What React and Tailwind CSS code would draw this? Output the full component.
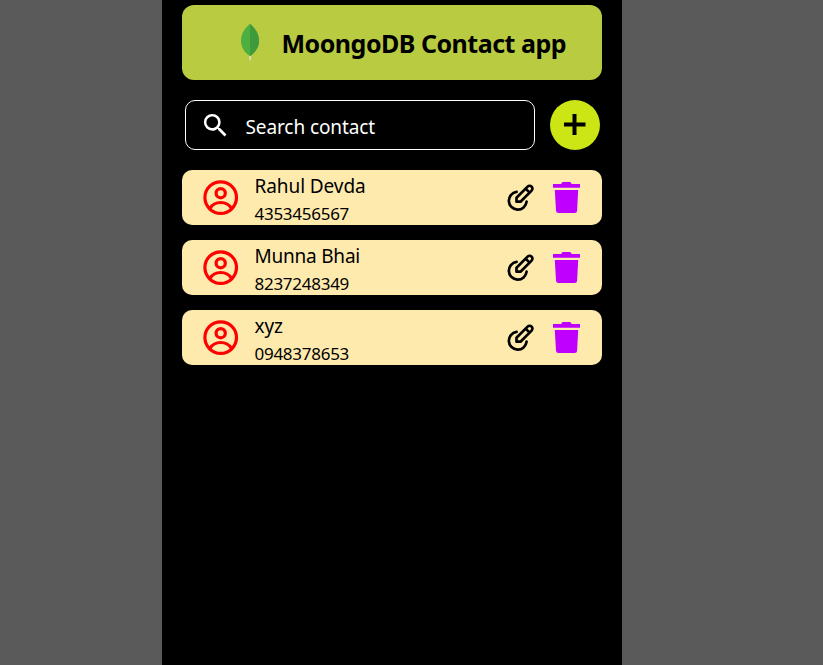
import React from "react";

const contacts = [
  { name: "Rahul Devda", phone: "4353456567", tracking: "tracking-[-0.08px]" },
  { name: "Munna Bhai", phone: "8237248349", tracking: "tracking-[-0.22px]" },
  { name: "xyz", phone: "0948378653", tracking: "tracking-[-0.1px]" },
];

function Leaf() {
  return (
    <svg className="mb-[2px] h-[38px] w-5 shrink-0" viewBox="0 0 20 38">
      <path d="M9.300 31h1.700v6.300H9.500z" fill="#e3dccb" />
      <path d="M10 .8C4.500 6 1 10.500 1 18c0 6 3.200 11 9 15.200C15.800 29 19 24 19 18 19 10.500 15.500 6 10 .8z" fill="#4caf3f" />
      <path d="M10 .8V33.200C15.800 29 19 24 19 18 19 10.500 15.500 6 10 .8z" fill="#3f9a3c" />
    </svg>
  );
}

function SearchIcon() {
  return (
    <svg className="size-[31px] shrink-0" viewBox="0 0 24 24" fill="#fff">
      <path d="M15.500 14h-.79l-.28-.27A6.471 6.471 0 0 0 16 9.500 6.500 6.500 0 1 0 9.500 16c1.610 0 3.090-.59 4.230-1.570l.27.28v.79l5 4.990L20.490 19l-4.990-5zm-6 0C7.010 14 5 11.990 5 9.500S7.010 5 9.500 5 14 7.010 14 9.500 11.990 14 9.500 14z" />
    </svg>
  );
}

function UserIcon() {
  return (
    <svg className="size-9 shrink-0" viewBox="0 0 36 36" fill="none" stroke="#f00" strokeWidth="3.200">
      <circle cx="17.700" cy="17.600" r="15.800" />
      <circle cx="17.700" cy="13.200" r="4.600" />
      <path d="M7 28.300C9 25 12.900 22.500 17.700 22.500S26.400 25 28.400 28.300" />
    </svg>
  );
}

function EditIcon() {
  return (
    <svg className="size-7 shrink-0" viewBox="0.7 0.8 28 28" fill="none" stroke="#000" strokeWidth="2.700">
      <path d="M10.300 8.700A8.900 8.900 0 1 0 20.300 18.500" strokeLinecap="round" />
      <path d="M10.200 18.500v-4L21.300 3.400a2.800 2.800 0 0 1 4 4L14.200 18.500z" strokeLinejoin="round" />
      <path d="M19.300 5.400l4 4" />
    </svg>
  );
}

function TrashIcon() {
  return (
    <svg className="h-8 w-7 shrink-0" viewBox="0.5 0.5 28 32" fill="#bf00ff">
      <path d="M.5 2.400H8.600L10 .5H17.800L19.200 2.400H27.500V6.200H.5z" />
      <path d="M2.300 8.500H25.700L24.600 29.200Q24.500 31.500 22.200 31.500H6Q3.700 31.500 3.500 29.200z" />
    </svg>
  );
}

function ContactCard({ contact }) {
  return (
    <li className="flex h-[55px] items-center rounded-[10px] bg-[#ffeaae] pr-[21px] pl-[21px]">
      <UserIcon />
      <div className="ml-[15.5px] flex-1 whitespace-nowrap">
        <p className={`pt-1 text-[19px] leading-[27px] ${contact.tracking}`}>{contact.name}</p>
        <p className="pt-px text-[17px] leading-[25px] tracking-[-0.27px]">{contact.phone}</p>
      </div>
      <EditIcon />
      <span className="ml-[18px]">
        <TrashIcon />
      </span>
    </li>
  );
}

export default function App() {
  return (
    <div className="flex h-screen justify-center overflow-hidden bg-[#5a5a5a] pr-[39px] font-['Noto_Sans','Open_Sans',sans-serif] text-black">
      <main className="w-[460px] bg-black px-5 pt-[5px]">
        <header className="flex h-[75px] items-center rounded-[12px] bg-[#b9cb41] pl-[58px]">
          <Leaf />
          <h1 className="ml-[21.5px] pt-px text-[25px] leading-8 font-bold tracking-[-0.5px] whitespace-nowrap">
            MoongoDB Contact app
          </h1>
        </header>
        <div className="mt-5 flex items-center justify-between pr-[2px] pl-[3px]">
          <label className="flex h-[50px] w-[350px] items-center rounded-[10px] border border-white pl-[14px] text-white">
            <SearchIcon />
            <input
              placeholder="Search contact"
              className="ml-[14.5px] w-[260px] bg-transparent pt-[5px] text-[19px] tracking-[-0.1px] outline-none placeholder:text-white"
            />
          </label>
          <button className="flex size-[50px] items-center justify-center rounded-full bg-[#cbe515]">
            <svg className="size-[22px]" viewBox="0 0 22 22">
              <path d="M0 10.500H21.500M10.500 0V21" stroke="#000" strokeWidth="4" />
            </svg>
          </button>
        </div>
        <ul className="mt-5 flex flex-col gap-[15px]">
          {contacts.map((contact) => (
            <ContactCard key={contact.phone} contact={contact} />
          ))}
        </ul>
      </main>
    </div>
  );
}
